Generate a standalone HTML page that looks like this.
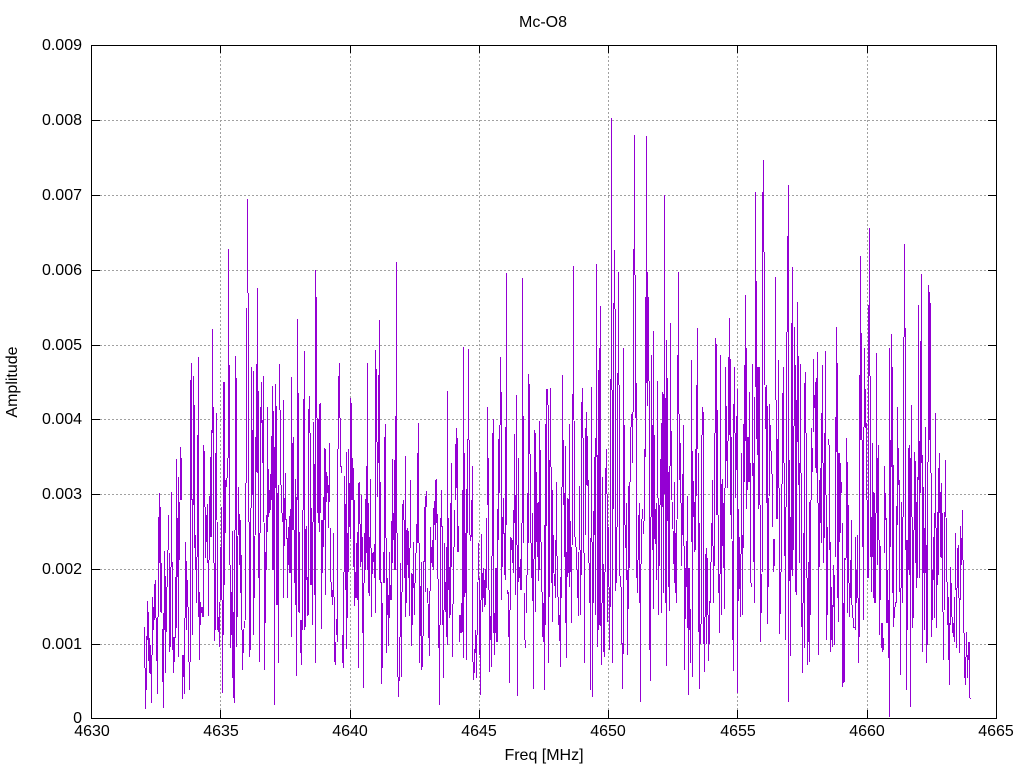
<!DOCTYPE html>
<html>
<head>
<meta charset="utf-8">
<title>Mc-O8</title>
<style>
html,body{margin:0;padding:0;background:#fff;}
svg{display:block;}
text{font-family:"Liberation Sans",sans-serif;font-size:16px;fill:#000;}
</style>
</head>
<body>
<svg xmlns="http://www.w3.org/2000/svg" width="1024" height="768" viewBox="0 0 1024 768">
<rect width="1024" height="768" fill="#fff"/>
<g stroke="#a0a0a0" stroke-width="1" stroke-dasharray="2 2" shape-rendering="crispEdges" fill="none">
<path d="M92 644.5H996M92 569.5H996M92 494.5H996M92 419.5H996M92 345.5H996M92 270.5H996M92 195.5H996M92 120.5H996"/>
<path d="M220.5 718V45M350.5 718V45M479.5 718V45M608.5 718V45M737.5 718V45M867.5 718V45"/>
</g>
<path transform="translate(.5 0)" fill="none" stroke="#9400d3" stroke-width="1" shape-rendering="crispEdges" d="
M144 627V668M145 668V709M146 636V690M147 601V640M148 612V661M149 638V673M150 645V674M151 655V703M152 597V655M153 607V630M154 584V620M155 580V618M156 618V661M157 617V694M158 517V617M159 493V563M160 507V612M161 563V613M162 629V682M163 613V708M164 551V630M165 576V673M166 587V632M167 550V587M168 515V550M169 553V652M170 567V647M171 492V567M172 562V650M173 637V673M174 637V662M175 577V638M176 459V628M177 518V577M178 477V657M179 502V560M180 447V500M181 458V500M182 655V699M183 655V677M184 618V694
M185 542V618M186 561V630M187 580V607M188 607V662M189 662V690M190 380V662M191 363V500M192 499V635M193 376V505M194 405V548M195 535V570M196 557V603M197 435V557M198 357V617M199 592V660M200 602V625M201 607V613M202 607V617M203 445V617M204 451V507M205 507V558M206 515V542M207 504V563M208 560V616M209 496V560M210 457V537M211 430V537M212 329V433M213 407V563M214 563V641M215 453V630M216 413V520M217 522V630M218 617V632M219 602V647M220 547V600M221 507V600M222 600V693M223 382V635M224 382V585
M225 480V533M226 478V487M227 458V478M228 249V458M229 365V565M230 565V648M231 592V635M232 531V678M233 612V698M234 530V703M235 356V530M236 378V647M237 536V617M238 487V535M239 514V565M240 520V593M241 555V630M242 630V670M243 629V653M244 621V628M245 483V620M246 308V483M247 199V293M248 293V522M249 522V657M250 508V650M251 367V508M252 430V495M253 371V635M254 536V598M255 437V535M256 364V472M257 288V473M258 391V578M259 533V662M260 407V533M261 382V423M262 420V463M263 376V522M264 523V670M265 552V623M266 515V570M267 407V532M268 469V517M269 490V513M270 474V510M271 436V500M272 386V570M273 411V570M274 447V705M275 384V488M276 406V605M277 493V605M278 485V663M279 364V410M280 410V485M281 485V513M282 513V522M283 400V598M284 498V546M285 473V520M286 519V539M287 538V598M288 527V565M289 516V573M290 509V573M291 377V637M292 443V530M293 437V530M294 530V583M295 479V605M296 497V676M297 319V500M298 393V612M299 532V613M300 620V653M301 620V665M302 510V630M303 399V510M304 351V630M305 529V627M306 526V580M307 577V616M308 409V615M309 396V433M310 433V585M311 508V585M312 522V625M313 422V522M314 464V595M315 270V663M316 297V418M317 418V513M318 419V523M319 404V532M320 403V513M321 520V629M322 520V573M323 497V547M324 448V520M325 449V595M326 472V502M327 476V493M328 485V528M329 443V502M330 528V582M331 582V597M332 590V605M333 533V597M334 597V662
M335 642V665M336 619V635M337 449V642M338 376V449M339 363V418M340 418V467M341 466V473M342 635V663M343 572V668M344 476V572M345 504V590M346 452V649M347 533V618M348 449V572M349 483V527M350 398V539M351 403V500M352 458V500M353 468V567M354 500V606M355 572V598M356 543V598M357 532V600M358 483V668M359 482V524M360 524V567M361 495V562M362 537V633M363 583V688M364 533V583M365 499V570M366 466V553M367 363V570M368 503V593M369 537V596M370 479V548M371 548V617M372 553V574M373 552V562M374 544V578M375 350V613M376 369V442M377 442V497M378 375V463M379 320V580M380 482V583M381 582V684M382 603V668M383 552V583M384 437V583M385 424V538M386 538V653M387 578V615M388 595V646M389 552V618M390 585V600M391 521V600M392 459V563M393 513V540M394 460V570M395 416V570M396 262V533M397 533V677M398 677V697M399 637V681M400 563V637M401 592V677M402 504V592M403 500V520M404 520V578M405 456V617M406 530V603M407 528V565M408 531V578M409 548V616M410 480V548M411 573V646M412 574V625M413 542V588M414 583V615M415 553V583M416 524V553M417 453V543M418 423V543M419 543V663M420 586V636M421 562V670M422 636V667M423 561V636M424 507V562M425 496V592M426 491V507M427 588V603M428 604V638M429 591V656M430 527V591M431 547V563M432 540V567M433 508V570M434 501V525M435 480V540M436 479V523M437 514V579M438 579V648M439 625V705
M440 518V625M441 490V527M442 526V625M443 610V678M444 543V610M445 582V612M446 547V637M447 391V645M448 518V590M449 567V618M450 503V615M451 463V567M452 604V657M453 547V604M454 510V547M455 444V500M456 428V488M457 438V552M458 526V552M459 615V642M460 615V633M461 603V633M462 490V632M463 347V658M464 453V597M465 533V593M466 489V660M467 439V533M468 349V440M469 440V535M470 535V541M471 500V537M472 466V662M473 662V680M474 649V673M475 630V653M476 635V678M477 582V635M478 543V580M479 578V655M480 600V695M481 534V600M482 573V612M483 568V598M484 580V607M485 569V605M486 518V588M487 407V505M488 458V590M489 590V672M490 616V640M491 556V667M492 433V556M493 419V633M494 613V655M495 568V633M496 568V642M497 509V642M498 439V540M499 425V493M500 357V425M501 392V600M502 517V567M503 498V534M504 533V575M505 427V580M506 273V525M507 590V594M508 592V637M509 610V683M510 537V610M511 538V550M512 540V563M513 510V573M514 434V523M515 495V595M516 395V545M517 545V696M518 458V582M519 567V578M520 559V590M521 523V590M522 278V523M523 416V543M524 593V640M525 640V648M526 575V613M527 493V575M528 374V543M529 384V454M530 454V543M531 543V578M532 513V601M533 559V689M534 430V559M535 433V612M536 472V542M537 503V557M538 502V581M539 421V570M540 450V542M541 542V592M542 592V637M543 603V642M544 525V690
M545 424V625M546 389V526M547 389V405M548 405V663M549 460V597M550 388V467M551 467V583M552 490V622M553 535V573M554 574V586M555 540V598M556 482V556M557 556V597M558 597V625M559 615V641M560 577V667M561 487V598M562 375V487M563 440V505M564 493V557M565 446V623M566 552V658M567 498V577M568 499V573M569 424V587M570 521V572M571 547V623M572 394V545M573 266V420M574 421V537M575 537V547M576 547V570M577 570V598M578 552V616M579 486V550M580 550V615M581 402V575M582 388V438M583 438V553M584 553V663M585 428V535M586 412V485M587 436V486M588 480V563M589 563V603M590 538V690M591 387V542M592 542V697M593 511V603M594 457V535M595 438V615M596 264V457M597 455V647M598 370V630M599 348V625M600 306V590
M600 449V626M601 603V665M602 477V603M603 564V652M604 572V657M605 468V572M606 449V494M607 494V622M608 527V587M609 587V650M610 379V607M611 118V390M612 390V663M613 303V509M614 250V309M615 309V591M616 527V583M617 373V527M618 272V385M619 385V576M620 576V587M621 587V644M622 643V689M623 348V654M624 425V525M625 525V548M626 503V580M627 570V655M628 486V609M629 482V568M630 427V482M631 414V427M632 412V463M633 249V412M634 135V275M635 275V418M636 383V578M637 560V593M638 515V560M639 503V603M640 564V702M641 519V564M642 509V519M643 521V534M644 449V521M645 297V457M646 136V383M647 272V406M648 297V381M649 381V650M650 517V681M651 355V517M652 425V550M653 331V609M654 435V539M655 509V544M656 503V580M657 381V498M658 498V615M659 505V566M660 459V505M661 423V613M662 392V507M663 394V593M664 195V494M665 398V603M666 340V666M667 378V521M668 472V587M669 466V611M670 323V466M671 431V500M672 502V529M673 531V564M674 482V583M675 533V593M676 520V603M677 355V519M678 272V414M679 414V480M680 443V503M681 503V566M682 474V535M683 425V546M684 546V670M685 568V619M686 541V587M687 496V628M688 568V695M689 568V630M690 609V663M691 360V542M692 451V677M693 481V517M694 502V552M695 449V550M696 385V496M697 328V449M698 453V632M699 523V689M700 624V644M701 435V624M702 407V435M703 412V644M704 617V672M705 554V617M706 548V644M707 558V615M708 615V661M709 601V644M710 562V603M711 523V562M712 480V546M713 546V603M714 433V566M715 338V433M716 344V515M717 410V515M718 515V593M719 574V633M720 355V574M721 484V615M722 479V546M723 503V568M724 488V609M725 367V488M726 406V461M727 441V488M728 357V441M729 318V435M730 359V515M731 437V539M732 541V640M733 404V671M734 367V433M735 433V498M736 416V470M737 389V693M738 509V601M739 537V589M740 554V617M741 453V554M742 535V615M743 424V548M744 365V482M745 295V441M746 348V509M747 437V490M748 437V482M749 392V482M750 463V583M751 583V587M752 364V476M753 463V562M754 397V603M755 192V387M756 281V439M757 367V455M758 367V509M759 367V505M760 505V642M761 574V613M762 192V572M763 160V252M764 252V385M765 387V429M766 385V503M767 406V624M768 498V587M769 404V496M770 425V451M771 451V474M772 474V527M773 539V572M774 539V566M775 277V400M776 400V519M777 439V519M778 360V488M779 488V634M780 572V614M781 484V572M782 393V484M783 367V463M784 463V556M785 507V640M786 332V507M787 236V332M788 185V702M789 460V581
M790 517V656M791 323V570M792 267V576M793 426V550M794 327V426M795 365V592M796 400V595M797 302V442M798 356V485M799 463V563M800 364V473M801 473V627M802 603V673M803 533V603M804 383V648M805 372V433M806 433V578M807 578V665M808 562V642M809 502V662M810 500V615M811 428V500M812 448V472M813 359V432M814 395V408M815 382V468M816 378V473M817 352V503M818 503V655M819 480V567M820 468V523M821 413V543M822 365V463M823 463V563M824 433V538M825 351V495M826 495V640M827 527V615M828 439V445M829 445V550M830 542V652M831 587V640M832 605V647M833 565V607M834 575V645M835 417V557M836 327V452M837 363V598M838 453V622M839 453V542M840 463V533M841 482V493M842 523V687M843 603V683M844 558V682M845 558V560M846 438V558M847 462V613M848 505V583M849 583V617M850 560V598M851 520V605M852 605V618M853 618V628M854 627V628M855 537V630M856 570V603M857 535V598M858 598V663M859 375V637M860 256V440M861 333V440M862 440V547M863 427V620M864 348V427M865 389V428M866 423V500M867 500V578M868 305V578M869 228V376M870 376V557M871 517V592M872 443V557M873 492V598M874 493V603M875 513V603M876 353V513M877 458V565M878 445V540M879 540V635M880 546V600M881 623V648M882 623V652M883 638V650M884 466V553M885 493V520M886 518V623M887 570V623M888 600V658M889 348V717M890 440V547M891 334V467M892 367V593M893 465V627M894 607V618M895 602V607M896 506V603M897 407V525M898 448V485M899 480V592M900 588V675M901 502V588M902 517V603M903 337V517M904 244V337M905 328V550M906 540V690M907 540V630M908 448V570M909 445V575M910 458V707M911 405V517M912 517V628M913 530V618M914 452V530M915 461V563M916 502V588M917 477V578M918 305V480M919 441V578M920 341V493M921 274V463M922 455V652M923 487V573M924 528V630M925 427V573M926 545V663M927 462V645M928 285V462M929 292V440M930 303V473M931 473V637M932 570V620M933 537V580M934 513V618M935 413V528M936 528V628M937 512V585M938 468V575M939 453V513M940 492V557M941 483V558M942 513V612M943 612V660M944 512V610M945 460V517M946 518V582M947 582V625M948 597V660M949 623V685M950 567V625M951 583V617M952 617V633M953 623V637M954 597V642M955 533V590M956 588V648M957 548V588M958 545V598M959 598V653M960 526V600M961 538V565M962 510V560M963 560V633M964 633V678M965 657V685M966 632V657M967 655V678M968 642V660M969 642V698M970 698V699"/>
<g stroke="#000" stroke-width="1" fill="none" shape-rendering="crispEdges">
<path d="M91.5 45.5H996.5V718.5H91.5Z"/>
<path d="M92 644.5h8M92 569.5h8M92 494.5h8M92 419.5h8M92 345.5h8M92 270.5h8M92 195.5h8M92 120.5h8"/>
<path d="M996 644.5h-8M996 569.5h-8M996 494.5h-8M996 419.5h-8M996 345.5h-8M996 270.5h-8M996 195.5h-8M996 120.5h-8"/>
<path d="M220.5 718v-8M350.5 718v-8M479.5 718v-8M608.5 718v-8M737.5 718v-8M867.5 718v-8"/>
<path d="M220.5 45v8M350.5 45v8M479.5 45v8M608.5 45v8M737.5 45v8M867.5 45v8"/>
</g>
<g text-anchor="end">
<text x="82" y="723">0</text>
<text x="82" y="649">0.001</text>
<text x="82" y="574">0.002</text>
<text x="82" y="499">0.003</text>
<text x="82" y="424">0.004</text>
<text x="82" y="350">0.005</text>
<text x="82" y="275">0.006</text>
<text x="82" y="200">0.007</text>
<text x="82" y="125">0.008</text>
<text x="82" y="50">0.009</text>
</g>
<g text-anchor="middle">
<text x="92" y="736">4630</text>
<text x="221" y="736">4635</text>
<text x="350" y="736">4640</text>
<text x="479" y="736">4645</text>
<text x="608" y="736">4650</text>
<text x="738" y="736">4655</text>
<text x="867" y="736">4660</text>
<text x="996" y="736">4665</text>
<text x="543" y="27">Mc-O8</text>
<text x="544" y="760">Freq [MHz]</text>
<text transform="translate(17 382) rotate(-90)">Amplitude</text>
</g>
</svg>
</body>
</html>
